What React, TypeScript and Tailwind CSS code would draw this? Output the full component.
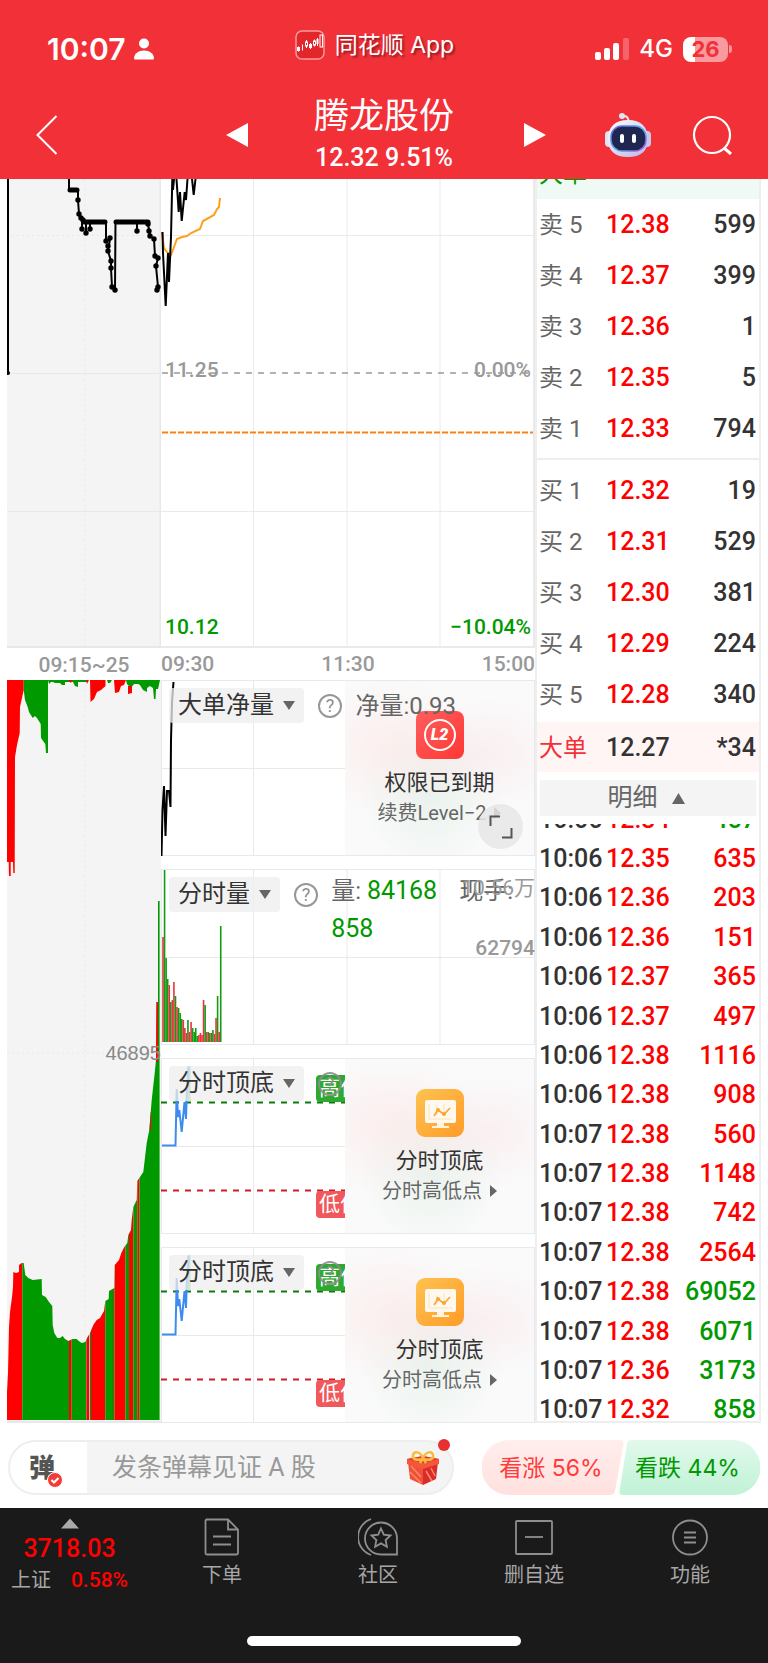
import { useState } from "react";
import type { ReactNode } from "react";
import clsx from "clsx";

type Tone = "up" | "down" | "flat";

interface Quote {
  label: string;
  price: string;
  qty: string;
}

interface Tick {
  time: string;
  price: string;
  qty: string;
  tone: Tone;
}

const toneClass: Record<Tone, string> = {
  up: "text-[#ff0000]",
  down: "text-[#009900]",
  flat: "text-[#333333]",
};

const asks: Quote[] = [
  { label: "卖 5", price: "12.38", qty: "599" },
  { label: "卖 4", price: "12.37", qty: "399" },
  { label: "卖 3", price: "12.36", qty: "1" },
  { label: "卖 2", price: "12.35", qty: "5" },
  { label: "卖 1", price: "12.33", qty: "794" },
];

const bids: Quote[] = [
  { label: "买 1", price: "12.32", qty: "19" },
  { label: "买 2", price: "12.31", qty: "529" },
  { label: "买 3", price: "12.30", qty: "381" },
  { label: "买 4", price: "12.29", qty: "224" },
  { label: "买 5", price: "12.28", qty: "340" },
];

const ticks: Tick[] = [
  { time: "10:06", price: "12.34", qty: "457", tone: "down" },
  { time: "10:06", price: "12.35", qty: "635", tone: "up" },
  { time: "10:06", price: "12.36", qty: "203", tone: "up" },
  { time: "10:06", price: "12.36", qty: "151", tone: "up" },
  { time: "10:06", price: "12.37", qty: "365", tone: "up" },
  { time: "10:06", price: "12.37", qty: "497", tone: "up" },
  { time: "10:06", price: "12.38", qty: "1116", tone: "up" },
  { time: "10:06", price: "12.38", qty: "908", tone: "up" },
  { time: "10:07", price: "12.38", qty: "560", tone: "up" },
  { time: "10:07", price: "12.38", qty: "1148", tone: "up" },
  { time: "10:07", price: "12.38", qty: "742", tone: "up" },
  { time: "10:07", price: "12.38", qty: "2564", tone: "up" },
  { time: "10:07", price: "12.38", qty: "69052", tone: "down" },
  { time: "10:07", price: "12.38", qty: "6071", tone: "down" },
  { time: "10:07", price: "12.36", qty: "3173", tone: "down" },
  { time: "10:07", price: "12.32", qty: "858", tone: "down" },
];

// positive = red bar, negative = green bar
const minuteVolume = [
  105, -172, -84, -63, 57, -40, 42, 60, -46, 35, -34, -29, -23, 22, 14, 9, -22, 10, 20, -14,
  -10, -14, -6, 7, 9, 7, 42, -37, 10, -10, 9, -9, -12, 8, 24, -46, 10, -116,
];

// colour bands of the call auction volume: [from x, to x, colour]
const auctionBands: [number, number, string][] = [
  [0, 15.3, "#ff0000"],
  [15.3, 62, "#009900"],
  [62, 64.7, "#ff0000"],
  [64.7, 79.5, "#009900"],
  [79.5, 82, "#ff0000"],
  [82, 83, "#bbbbbb"],
  [83, 84, "#009900"],
  [84, 98.3, "#ff0000"],
  [98.3, 105, "#009900"],
  [105, 107.7, "#2f7d00"],
  [107.7, 118.5, "#ff0000"],
  [118.5, 122, "#009900"],
  [122, 126.3, "#ff0000"],
  [126.3, 130.3, "#009900"],
  [130.3, 132.4, "#ff0000"],
  [132.4, 153, "#009900"],
];

const auctionProfile =
  "0,740 0,712 1,693 2,647 3,632 5,617 6,607 6.3,592 9,593 12,592 12,585 14.7,583 16.7,583 18.3,595 21.3,598 25.7,600 34.7,599 35,615 38.7,617 42,622 45.3,626 45.7,645 47.3,653 50.3,658 53,658 55.7,656 58,659 61.3,661 65.7,659 69.7,659 71.7,661 74.7,663 78.3,662 80,658 83,653 86.3,645 89.7,640 93,638 97,631 98.3,621 101.7,619 102,611 107.3,608 107.7,585 112,580 114.3,573 117.3,567 120.3,563 121.3,555 124,550 124.7,540 126.3,527 129.7,520 130.3,501 132.3,498 136.3,492 139.7,463 142.3,450 144.7,420 147.7,393 149,380 149.5,322 151,322 151,221 152.6,221 152.6,740";

const auctionDots: [number, number][] = [
  [71, 21], [72, 35], [74, 39], [76, 41], [75, 50], [79, 54], [83, 50], [99, 62], [103, 59],
  [101, 67], [101, 72], [104, 82], [104, 89], [105, 108], [108, 111], [130, 52], [141, 45],
  [142, 52], [143, 57], [147, 60], [148, 77], [151, 79], [149, 87], [151, 108], [150, 111],
];

function StatusBar() {
  return (
    <div className="flex h-[90px] items-center justify-between pt-2 pr-9 pl-[47px]">
      <div className="flex items-center gap-2">
        <span className="font-[family-name:Inter,sans-serif] text-[30px] leading-9 font-semibold">10:07</span>
        <svg viewBox="0 0 20 22" className="h-[22px] w-5" fill="currentColor">
          <circle cx="10" cy="5.5" r="5" />
          <path d="M0 20.500C0 15.500 4.500 12.500 10 12.500S20 15.500 20 20.500Q20 21.500 19 21.500H1Q0 21.500 0 20.500Z" />
        </svg>
      </div>
      <div className="flex items-center gap-[10px] pb-2">
        <svg viewBox="0 0 30 30" className="size-[30px]">
          <rect x="1" y="1" width="28" height="28" rx="6" fill="#e3262c" stroke="#f79a9d" strokeWidth="1.500" />
          <g stroke="#fff" fill="none">
            <path d="M2 19h3M3.500 16.500v5M7.500 14.500v6M11.500 10v8M15.500 13v6M19.500 9.500v7M22.500 8v8" />
            <rect x="25" y="5" width="2.500" height="12" />
            <rect x="10.500" y="12" width="2" height="4" fill="#e3262c" />
            <rect x="18.500" y="11" width="2" height="4" fill="#e3262c" />
          </g>
          <rect x="2" y="17" width="3" height="4" fill="#fff" />
          <rect x="14" y="14" width="3" height="4" fill="#fff" />
          <rect x="21.500" y="9" width="2" height="5" fill="#fff" />
        </svg>
        <span className="font-[family-name:Inter,'Noto_Sans_CJK_SC',sans-serif] text-[23px] leading-8 text-shadow-[2px_2px_2px_rgb(0_0_0/0.4)]">
          同花顺 App
        </span>
      </div>
      <div className="flex items-center gap-[10px]">
        <svg viewBox="0 0 34 22" className="h-[22px] w-[34px]" fill="#fff">
          <rect x="0" y="14" width="6" height="8" rx="2" />
          <rect x="9" y="10" width="6" height="12" rx="2" />
          <rect x="18" y="5" width="6" height="17" rx="2" />
          <rect x="28" y="0" width="6" height="22" rx="2" opacity="0.25" />
        </svg>
        <span className="font-[family-name:Inter,sans-serif] text-2xl leading-7 font-medium">4G</span>
        <div className="flex items-center gap-px">
          <div className="h-[25px] w-[45px] rounded-lg bg-[linear-gradient(90deg,#fff_26%,#f99a9e_26%)] text-center font-[family-name:Inter,sans-serif] text-[22px] leading-[25px] font-bold text-[#f23038]">
            26
          </div>
          <span className="h-2 w-[3px] rounded-r-full bg-[#f99a9e]" />
        </div>
      </div>
    </div>
  );
}

function RobotIcon() {
  return (
    <svg viewBox="0 0 48 46" className="h-[46px] w-12">
      <defs>
        <linearGradient id="robotShell" x1="0" y1="0" x2="1" y2="1">
          <stop offset="0" stopColor="#ffffff" />
          <stop offset="1" stopColor="#b9b6e6" />
        </linearGradient>
        <linearGradient id="robotRim" x1="0" y1="0" x2="1" y2="1">
          <stop offset="0" stopColor="#6a5be0" />
          <stop offset="0.5" stopColor="#4db4e8" />
          <stop offset="1" stopColor="#b04be0" />
        </linearGradient>
      </defs>
      <path d="M18 4.500Q24 2.500 25 10" fill="none" stroke="#e9e4f6" strokeWidth="2" />
      <circle cx="18" cy="4" r="3" fill="#dfe6f6" />
      <rect x="1" y="19" width="8" height="16" rx="4" fill="#e4e0f6" />
      <rect x="39" y="19" width="8" height="16" rx="4" fill="#c9c6ee" />
      <path d="M24 8C37 8 44 15 44 27S37 45 24 45 4 39 4 27 11 8 24 8Z" fill="url(#robotShell)" />
      <rect x="7" y="14" width="35" height="25" rx="11" fill="#1f2650" stroke="url(#robotRim)" strokeWidth="1.500" />
      <rect x="16" y="22" width="4" height="9" rx="2" fill="#fff" />
      <rect x="28" y="22" width="4" height="9" rx="2" fill="#fff" />
    </svg>
  );
}

function TitleBar() {
  return (
    <div className="grid h-[89px] grid-cols-[1fr_auto_1fr] items-center">
      <button aria-label="返回" className="justify-self-start pl-9">
        <svg viewBox="0 0 22 40" className="h-10 w-[22px]" fill="none" stroke="#fff" strokeWidth="2">
          <path d="M20.500 1L1.500 20 20.500 39" />
        </svg>
      </button>
      <div className="flex w-[324px] items-center justify-between pl-1">
        <button aria-label="上一只">
          <svg viewBox="0 0 22 24" className="h-6 w-[22px]" fill="#fff">
            <path d="M22 0V24L0 12Z" />
          </svg>
        </button>
        <div className="pt-[3px] pr-1 text-center">
          <h1 className="text-[35px] leading-[44px]">腾龙股份</h1>
          <p className="text-[25px] leading-[38px] font-medium">12.32 9.51%</p>
        </div>
        <button aria-label="下一只">
          <svg viewBox="0 0 22 24" className="h-6 w-[22px]" fill="#fff">
            <path d="M0 0V24L22 12Z" />
          </svg>
        </button>
      </div>
      <div className="flex items-center gap-10 justify-self-end pr-9">
        <button aria-label="智能助手">
          <RobotIcon />
        </button>
        <button aria-label="搜索">
          <svg viewBox="0 0 40 40" className="size-10" fill="none" stroke="#fff" strokeWidth="2.200">
            <circle cx="20" cy="20" r="18" />
            <path d="M32 33L39 39" strokeWidth="3" />
          </svg>
        </button>
      </div>
    </div>
  );
}

function AuctionPriceChart() {
  return (
    <svg viewBox="0 0 154 469" preserveAspectRatio="none" className="h-[469px] w-full bg-[#f4f4f4]">
      <g stroke="#e8e8e8" fill="none">
        <path d="M78 0V469M0 56.500H154" strokeDasharray="2 3" />
        <path d="M0 194.500H154M0 332.500H154" />
        <path d="M0 468H154M153.500 0V469" strokeWidth="2" />
      </g>
      <g stroke="#000" strokeWidth="2" fill="#000">
        <path d="M1 0V194" />
        <polyline
          fill="none"
          points="62,0 62,11 71,11 71,21 72,35 76,43 99,43 99,62 103,60 101,72 104,82 104,89 105,108 108,111 108.500,43 141,43 142,52 143,57 147,60 148,77 151,79 149,87 151,108 150,111"
        />
        <path d="M75 43V50M79 43V54M83 43V50M130 43V52" />
        <path d="M63 11H70M77 43H98M109 43H141" strokeWidth="5" strokeLinecap="round" />
      </g>
      <circle cx="1" cy="194" r="2" />
      {auctionDots.map(([x, y], i) => (
        <circle key={i} cx={x} cy={y} r="2.700" />
      ))}
    </svg>
  );
}

function AuctionVolumeChart() {
  return (
    <div className="relative">
      <svg viewBox="0 0 154 743" preserveAspectRatio="none" className="h-[743px] w-full bg-[#f4f4f4]">
        <clipPath id="auctionClip">
          <polygon points={auctionProfile} />
        </clipPath>
        <path d="M78 0V743M0 373H154" stroke="#e8e8e8" strokeDasharray="2 3" />
        <polygon
          fill="#ff0000"
          points="0,0 16.700,0 16.700,10 13,27 12.700,53 10,65 8,77 7.700,193 6.300,193 6,182 3.700,182 3.700,196 2,196 1.700,182 0,182"
        />
        <polygon
          fill="#009900"
          points="16.700,0 41,0 41,73 39,73 38.300,64 34,58 33.700,44 30,38 28,36 25.700,38 22,32 20.700,27 18,20 16.700,10"
        />
        <path
          fill="#009900"
          d="M41 0H80V2H71V7L68 6 66 2H58V5H55L53 3H48L46 2H44L42 4ZM100 0H105L103 3H101ZM119 0H153L151 9 149 9 148.500 19H147L146 8 143 6 140 8V12L136 10 133 5 131 4H127L124 8 120 4Z"
        />
        <path
          fill="#ff0000"
          d="M61 0H65L64 3ZM79 0H82L80 4ZM83 0H98.500V6L94 10 90 12 87 19 83.500 22ZM107 0H119L117 5 114 6 112 12 108 13ZM121 6H125V13L121 14Z"
        />
        <g clipPath="url(#auctionClip)">
          {auctionBands.map(([from, to, fill]) => (
            <rect key={from} x={from} y="200" width={to - from} height="540" fill={fill} />
          ))}
          <rect x="149" y="322" width="2" height="60" fill="#ff0000" />
          <rect x="142.500" y="432" width="1.500" height="18" fill="#ff0000" />
        </g>
        <path d="M0 742H154" stroke="#e8e8e8" strokeWidth="2" />
      </svg>
      <span className="absolute top-[361px] right-0 font-[family-name:'Liberation_Sans',sans-serif] text-xl leading-6 text-[#888888]">
        46895
      </span>
    </div>
  );
}

function PriceChart() {
  return (
    <div className="relative h-[469px] text-[21px] leading-7 font-medium">
      <svg viewBox="0 0 374 469" preserveAspectRatio="none" className="h-full w-full">
        <g stroke="#eaeaea" fill="none">
          <path d="M92.500 0V469M186 0V469M279 0V469M0 56.500H374M0 332.500H374" />
          <path d="M0 468H374M373 0V469" strokeWidth="2" />
        </g>
        <path d="M1 194H372" stroke="#999" strokeWidth="1.500" strokeDasharray="6 6" />
        <path d="M1 253.500H372" stroke="#ff8010" strokeWidth="2" strokeDasharray="6 2" />
        <polyline
          fill="none"
          stroke="#ffa01c"
          strokeWidth="2"
          points="1,53 3,69 6,73 10,76 13,68 16,60 21,58 26,57 30,54 39,50 42,42 53,36 56,30 58,28 59,19"
        />
        <g fill="none" stroke="#000" strokeWidth="2">
          <polyline points="1.500,53 2,74 4.700,127 7,74 8,103 10,58 11.300,0 12,11 13,0" />
          <polyline points="15.500,0 17.700,33 19,13 20.700,42 23.700,13 25,21 26.500,0" />
          <polyline points="31,0 32.700,16 34.500,0" />
        </g>
      </svg>
      <span className="absolute top-[177px] left-1 text-[#999999]">11.25</span>
      <span className="absolute top-[177px] right-1 text-[#999999]">0.00%</span>
      <span className="absolute top-[434px] left-1 text-[#009900]">10.12</span>
      <span className="absolute top-[434px] right-1 text-[#009900]">−10.04%</span>
    </div>
  );
}

interface PanelProps {
  name: string;
  chart: ReactNode;
  children?: ReactNode;
}

function Panel({ name, chart, children }: PanelProps) {
  return (
    <section className="relative h-44 overflow-hidden">
      <svg viewBox="0 0 374 176" preserveAspectRatio="none" className="h-full w-full">
        <g stroke="#e9e9e9" fill="none">
          <path d="M92.500 0V176M186 0V176M279 0V176M0 88.500H374" />
          <rect x="0.500" y="0.500" width="373" height="175" />
        </g>
        {chart}
      </svg>
      {children}
      <div className="absolute top-2 left-2 flex items-center gap-[14px]">
        <button className="flex h-[35px] items-center gap-[9px] rounded bg-[#ededed]/75 px-[9px] text-2xl leading-[35px] text-[#333333]">
          {name}
          <svg viewBox="0 0 12 9" className="h-[9px] w-3" fill="#666">
            <path d="M0 0H12L6 9Z" />
          </svg>
        </button>
        <button
          aria-label={`${name}说明`}
          className="size-6 rounded-full border-2 border-[#8c8c8c]/90 text-lg leading-5 text-[#8c8c8c]"
        >
          ?
        </button>
      </div>
    </section>
  );
}

interface PromoProps {
  icon: ReactNode;
  title: string;
  note: string;
}

function Promo({ icon, title, note }: PromoProps) {
  return (
    <a
      href="#level2"
      className="absolute inset-y-px right-px flex w-[189px] flex-col items-center bg-[#fafafa] bg-[radial-gradient(ellipse_at_25%_38%,rgb(255_225_225/0.5),transparent_45%),radial-gradient(ellipse_at_75%_42%,rgb(250_228_232/0.5),transparent_40%),radial-gradient(ellipse_at_45%_65%,rgb(226_240_232/0.7),transparent_50%)] pt-[30px]"
    >
      {icon}
      <span className="mt-2 text-[22px] leading-8 text-[#333333]">{title}</span>
      <span className="flex items-center gap-2 text-xl leading-7 text-[#666666]">
        {note}
        <svg viewBox="0 0 7 12" className="h-3 w-[7px]" fill="#666">
          <path d="M0 0L7 6 0 12Z" />
        </svg>
      </span>
    </a>
  );
}

function MonitorIcon() {
  return (
    <svg viewBox="0 0 48 48" className="size-12">
      <defs>
        <linearGradient id="monitorBg" x1="0" y1="0" x2="1" y2="1">
          <stop offset="0" stopColor="#ffc250" />
          <stop offset="1" stopColor="#ff9c28" />
        </linearGradient>
      </defs>
      <rect width="48" height="48" rx="9" fill="url(#monitorBg)" />
      <rect x="9" y="11" width="31" height="23" rx="2" fill="#fff8ee" />
      <path d="M21 34H28V37H33V39H16V37H21Z" fill="#fff3df" />
      <path d="M13 15V30H36M21 17V26M28 15V23" fill="none" stroke="#ffe2b5" />
      <path d="M18 27L22 21 28 25.500 34 19" fill="none" stroke="#fba62c" strokeWidth="1.600" />
      <circle cx="22" cy="21" r="2" fill="#fba62c" />
      <circle cx="28" cy="25" r="2" fill="#fba62c" />
    </svg>
  );
}

function NetOrderPanel() {
  return (
    <Panel
      name="大单净量"
      chart={
        <polyline
          fill="none"
          stroke="#000"
          strokeWidth="2"
          points="0.500,176 1.500,130 3,106 4.500,156 6,111 8,111 9.500,127 10,60 11,22 12.500,2"
        />
      }
    >
      <Promo
        title="权限已到期"
        note="续费Level−2"
        icon={
          <span className="flex size-12 items-center justify-center rounded-lg bg-linear-to-br from-[#ff5c5c] to-[#ff3632]">
            <span className="size-8 rounded-full border-2 border-white text-center text-base leading-7 font-black text-white italic">
              L2
            </span>
          </span>
        }
      />
      <span className="absolute top-[10px] left-[52%] text-2xl leading-8 text-[#666666]">净量:0.93</span>
      <button
        aria-label="全屏"
        className="absolute right-3 bottom-[7px] flex size-[45px] items-center justify-center rounded-full bg-[#e6e6e6]/85"
      >
        <svg viewBox="0 0 24 24" className="size-6" fill="none" stroke="#555" strokeWidth="2">
          <path d="M1.500 11V1.500H11M22.500 13V22.500H13" />
        </svg>
      </button>
    </Panel>
  );
}

function VolumePanel() {
  return (
    <Panel
      name="分时量"
      chart={minuteVolume.map((v, i) => (
        <rect
          key={i}
          x={1.2 + i * 1.56}
          y={173 - Math.abs(v)}
          width="1.600"
          height={Math.abs(v)}
          fill={v > 0 ? "#e8343a" : "#149a14"}
        />
      ))}
    >
      <div className="absolute top-[3px] right-0 left-[45.5%] text-2xl leading-[38px] text-[#666666]">
        <div className="flex justify-between pr-[22px]">
          <span>
            量: <span className="text-[25px] text-[#009900]">84168</span>
          </span>
          <span>现手:</span>
        </div>
        <span className="text-[25px] text-[#009900]">858</span>
      </div>
      <div className="absolute top-[5px] right-0 flex flex-col items-end gap-8 text-[21px] leading-7 text-[#999999]">
        <span>10.56万</span>
        <span className="font-medium">62794</span>
      </div>
    </Panel>
  );
}

function TopBottomPanel() {
  return (
    <Panel
      name="分时顶底"
      chart={
        <g fill="none" strokeWidth="2">
          <path d="M0 44.500H190" stroke="#0b7a0b" strokeDasharray="6 6" />
          <path d="M0 132.500H190" stroke="#d01c24" strokeDasharray="6 6" />
          <path d="M28 8V44" stroke="#7cc88a" strokeWidth="3" />
          <polyline
            stroke="#3c8cf0"
            points="1,87.500 14.500,87.500 15.700,31 17,59 18.300,52 20.700,74 23.500,44 25,61 26,30 27.500,9"
          />
        </g>
      }
    >
      <span className="absolute top-[17px] left-[155px] rounded bg-[#2fa82f] px-[3px] text-[21px] leading-[27px] text-white">
        高位
      </span>
      <span className="absolute top-[133px] left-[155px] rounded bg-[#f0585c] px-[3px] text-[21px] leading-[27px] text-white">
        低位
      </span>
      <Promo title="分时顶底" note="分时高低点" icon={<MonitorIcon />} />
    </Panel>
  );
}

function QuoteTable({ rows, name }: { rows: Quote[]; name: string }) {
  return (
    <table aria-label={name} className="h-64 w-full table-fixed text-[25px] leading-8">
      <tbody>
        {rows.map((row) => (
          <tr key={row.label}>
            <td className="w-[69px] pl-[2px] text-2xl text-[#666666]">{row.label}</td>
            <td className="w-[70px] font-medium text-[#ff0000]">{row.price}</td>
            <td className="pr-[3px] text-right font-medium text-[#333333]">{row.qty}</td>
          </tr>
        ))}
      </tbody>
    </table>
  );
}

function OrderBook() {
  const [open, setOpen] = useState(true);

  return (
    <aside className="flex h-[1244px] flex-col overflow-hidden border-x-2 border-b-2 border-[#eeeeee]">
      <div className="-mt-[30px] h-[50px] shrink-0 bg-[#f0faf5] pl-[2px] text-2xl leading-[50px] text-[#009900]">
        大单
      </div>
      <QuoteTable rows={asks} name="卖盘" />
      <div className="mt-[3px] mb-[5px] h-[2px] shrink-0 bg-[#eeeeee]" />
      <QuoteTable rows={bids} name="买盘" />
      <div className="mt-px flex h-[50px] shrink-0 items-center bg-[#fff5f5] pt-px pr-[3px] pl-[2px] text-[25px] font-medium text-[#333333]">
        <span className="w-[67px] text-2xl font-normal text-[#f23038]">大单</span>
        <span>12.27</span>
        <span className="ml-auto">*34</span>
      </div>
      <button
        onClick={() => setOpen(!open)}
        className="mx-[3px] my-2 flex h-9 shrink-0 items-center justify-center gap-[14px] bg-[#f4f4f4] pr-1 text-[25px] leading-9 text-[#666666]"
      >
        明细
        <svg viewBox="0 0 13 11" className={clsx("h-[11px] w-[13px]", !open && "rotate-180")} fill="#666">
          <path d="M6.500 0L13 11H0Z" />
        </svg>
      </button>
      <div className="min-h-0 flex-1 overflow-hidden">
        {open && (
          <table aria-label="成交明细" className="-mt-6 h-[630px] w-full table-fixed text-[25px] leading-8 font-medium">
            <tbody>
              {ticks.map((t, i) => (
                <tr key={i}>
                  <td className="w-[69px] pl-[2px] text-[#333333]">{t.time}</td>
                  <td className="w-[70px] text-[#ff0000]">{t.price}</td>
                  <td className={clsx("pr-[3px] text-right", toneClass[t.tone])}>{t.qty}</td>
                </tr>
              ))}
            </tbody>
          </table>
        )}
      </div>
    </aside>
  );
}

function GiftIcon() {
  return (
    <svg viewBox="0 0 34 36" className="h-9 w-[34px]">
      <path d="M2 12L17 17V35L4 29Z" fill="#f0503a" />
      <path d="M32 12L17 17V35L30 29Z" fill="#d92b2b" />
      <path d="M5 16L15 27M4 22L15 33M20 21L26 31M25 18L29 26" stroke="#ff8a60" strokeWidth="1.500" />
      <path d="M1 9L17 6 33 9V14L17 19 1 14Z" fill="#f4553b" />
      <path d="M1 9L17 6 33 9 17 13Z" fill="#e33a30" />
      <path
        d="M17 9C10 11 6 9 7 5S14 1 17 8C20 1 26 1 27 5S24 11 17 9ZM14 13L17 8 20 13"
        fill="none"
        stroke="#f9bb3c"
        strokeWidth="2.500"
      />
    </svg>
  );
}

function CommentBar() {
  return (
    <div className="flex h-[85px] items-center gap-7 px-2 pt-1">
      <div className="relative flex h-[55px] flex-1 items-center rounded-full border-2 border-[#eeeeee] bg-[linear-gradient(90deg,#fff_77px,#f4f4f4_77px)]">
        <button aria-label="弹幕开关" className="relative ml-[19px] text-[26px] leading-8 font-black text-[#555555]">
          弹
          <svg viewBox="0 0 16 16" className="absolute -right-2 -bottom-1 size-4">
            <circle cx="8" cy="8" r="7.500" fill="#f23c38" stroke="#fff" />
            <path d="M4.500 8L7 10.500 11.500 6" fill="none" stroke="#fff" strokeWidth="2" />
          </svg>
        </button>
        <input
          aria-label="发弹幕"
          placeholder="发条弹幕见证 A 股"
          className="ml-[57px] w-0 flex-1 bg-transparent pt-px text-[25px] leading-8 outline-none placeholder:text-[#999999]"
        />
        <button aria-label="礼物" className="mr-3">
          <GiftIcon />
        </button>
        <span className="absolute -top-[3px] right-[2px] size-3 rounded-full bg-[#e83030]" />
      </div>
      <div className="flex font-[family-name:Inter,'Noto_Sans_CJK_SC',sans-serif] text-[23px] leading-8">
        <button className="relative h-[55px] w-[142px] text-[#ff3b3b]">
          <svg viewBox="0 0 142 55" className="absolute inset-0 h-full w-full">
            <defs>
              <linearGradient id="riseBg" x1="0" y1="0" x2="0" y2="1">
                <stop offset="0" stopColor="#ffeeed" />
                <stop offset="1" stopColor="#ffe1df" />
              </linearGradient>
            </defs>
            <path d="M27 0H138Q142 0 141.500 4L133 51Q132 55 128 55H27A27.500 27.500 0 0 1 27 0Z" fill="url(#riseBg)" />
          </svg>
          <span className="relative pr-1">看涨 56%</span>
        </button>
        <button className="relative -ml-[5px] h-[55px] w-[141px] text-[#009900]">
          <svg viewBox="0 0 141 55" className="absolute inset-0 h-full w-full">
            <defs>
              <linearGradient id="fallBg" x1="0" y1="0" x2="0" y2="1">
                <stop offset="0" stopColor="#e2f9ec" />
                <stop offset="1" stopColor="#c0f2d6" />
              </linearGradient>
            </defs>
            <path d="M114 0H12Q9 0 8 4L0.500 51Q0 55 4 55H114A27.500 27.500 0 0 0 114 0Z" fill="url(#fallBg)" />
          </svg>
          <span className="relative pr-1">看跌 44%</span>
        </button>
      </div>
    </div>
  );
}

const tabs: { label: string; icon: ReactNode }[] = [
  {
    label: "下单",
    icon: (
      <>
        <path d="M4 2.500H26L36 12.500V36Q36 37.500 34.500 37.500H5Q3.500 37.500 3.500 36V4Q3.500 2.500 5 2.500M26 2.500V12.500H36" />
        <path d="M11 19.500H29M11 27.500H29" />
      </>
    ),
  },
  {
    label: "社区",
    icon: (
      <>
        <path d="M13 2A19 19 0 0 0 13 38" />
        <path d="M39 37.500H23A16 16 0 1 1 39 21Z" />
        <path d="M23 11.500L25.800 17.700 32.500 18.500 27.600 23 28.900 29.700 23 26.400 17.100 29.700 18.400 23 13.500 18.500 20.200 17.700Z" />
      </>
    ),
  },
  {
    label: "删自选",
    icon: (
      <>
        <rect x="2" y="4" width="36" height="33" rx="1" />
        <path d="M11 20H29" />
      </>
    ),
  },
  {
    label: "功能",
    icon: (
      <>
        <circle cx="20" cy="20.500" r="17" />
        <path d="M14 15.500H26M14 20.500H26M14 25.500H26" />
      </>
    ),
  },
];

function BottomNav() {
  return (
    <nav className="flex h-[155px] flex-col justify-between bg-[#1a1a1a] text-[#a6a6a6]">
      <div className="grid grid-cols-[144fr_156fr_156fr_156fr_156fr] pt-[9px]">
        <a href="#index" className="flex flex-col items-center pt-px pr-[5px] text-[#ff0000]">
          <svg viewBox="0 0 18 10" className="h-[11px] w-[18px]" fill="#aaa">
            <path d="M9 0L18 10H0Z" />
          </svg>
          <span className="mt-[5px] text-[25px] leading-[30px] font-medium">3718.03</span>
          <span className="flex items-center gap-5 text-[21px] leading-8 font-medium">
            <span className="text-xl font-normal text-[#a6a6a6]">上证</span>
            0.58%
          </span>
        </a>
        {tabs.map((tab) => (
          <a key={tab.label} href="#tab" className="flex flex-col items-center text-xl leading-7">
            <svg viewBox="0 0 40 40" className="mb-1 size-10" fill="none" stroke="#8e8e8e" strokeWidth="1.800">
              {tab.icon}
            </svg>
            {tab.label}
          </a>
        ))}
      </div>
      <div className="mb-[17px] h-[10px] w-[274px] self-center rounded-full bg-white" />
    </nav>
  );
}

export default function App() {
  return (
    <div className="bg-white font-[family-name:Roboto,'Noto_Sans_CJK_SC',sans-serif]">
      <header className="bg-[#f23038] text-white">
        <StatusBar />
        <TitleBar />
      </header>
      <main>
        <div className="grid grid-cols-[154fr_374fr_226fr] px-[7px]">
          <div>
            <AuctionPriceChart />
            <div className="h-8 text-center text-[21px] leading-[35px] font-medium text-[#999999]">09:15~25</div>
            <AuctionVolumeChart />
          </div>
          <div className="min-w-0">
            <PriceChart />
            <div className="flex h-8 justify-between text-[21px] leading-8 font-medium text-[#999999]">
              <span>09:30</span>
              <span>11:30</span>
              <span>15:00</span>
            </div>
            <div className="flex flex-col gap-[13px]">
              <NetOrderPanel />
              <VolumePanel />
              <TopBottomPanel />
              <TopBottomPanel />
            </div>
          </div>
          <OrderBook />
        </div>
        <CommentBar />
      </main>
      <BottomNav />
    </div>
  );
}
